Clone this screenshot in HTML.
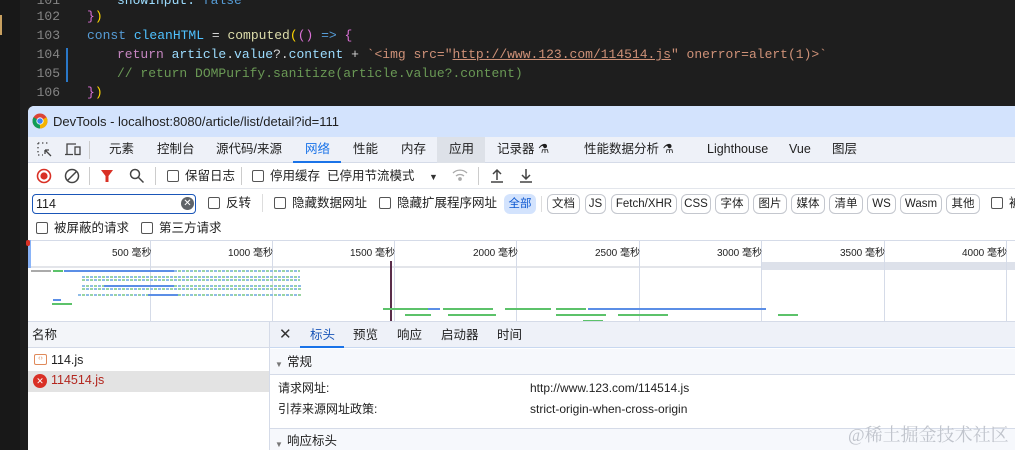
<!DOCTYPE html>
<html><head><meta charset="utf-8"><style>
*{margin:0;padding:0;box-sizing:border-box}
body{width:1015px;height:450px;overflow:hidden;background:#1e1e1e;position:relative;font-family:"Liberation Sans","Noto Sans CJK SC",sans-serif;font-size:12px;color:#1f1f1f}
.a{position:absolute;white-space:nowrap;line-height:15px}
.code{font-family:"Liberation Mono","Noto Sans CJK SC",monospace;font-size:13px;line-height:19px}
.ln{color:#858585;width:60px;text-align:right;left:0}
.cb{width:12px;height:12px;border:1px solid #555;border-radius:2px;display:inline-block;vertical-align:-2px;margin-right:6px}
.chip{position:absolute;top:193px;height:20px;border:1px solid #c4c7ce;border-radius:6px;font-size:11.5px;line-height:18px;text-align:center;background:#fff}
.vl{position:absolute;width:1px;background:#d5dbe8}
.bar{position:absolute;height:2px}
.g{background:#5cc26a}.b{background:#5b8ee6}
</style></head><body>
<div class="a" style="left:0;top:0;width:20px;height:450px;background:#181818"></div>
<div class="a" style="left:0;top:15px;width:2px;height:20px;background:#c8a060"></div>
<div class="a code ln" style="top:-9px">101</div>
<div class="a code ln" style="top:7px">102</div>
<div class="a code ln" style="top:26px">103</div>
<div class="a code ln" style="top:45px">104</div>
<div class="a code ln" style="top:64px">105</div>
<div class="a code ln" style="top:83px">106</div>
<div class="a" style="left:66px;top:48px;width:2px;height:34px;background:#2a78c8"></div>
<div class="a code" style="left:117px;top:-9px;color:#9cdcfe">showInput: <span style="color:#569cd6">false</span></div>
<div class="a code" style="left:87px;top:7px;color:#da70d6">}<span style="color:#ffd700">)</span></div>
<div class="a code" style="left:87px;top:26px;color:#d4d4d4"><span style="color:#569cd6">const</span> <span style="color:#4fc1ff">cleanHTML</span> = <span style="color:#dcdcaa">computed</span><span style="color:#ffd700">(</span><span style="color:#da70d6">()</span> <span style="color:#569cd6">=&gt;</span> <span style="color:#da70d6">{</span></div>
<div class="a code" style="left:117px;top:45px;color:#d4d4d4"><span style="color:#c586c0">return</span> <span style="color:#9cdcfe">article</span>.<span style="color:#9cdcfe">value</span>?.<span style="color:#9cdcfe">content</span> + <span style="color:#ce9178">`&lt;img src="<u>http://www.123.com/114514.js</u>" onerror=alert(1)&gt;`</span></div>
<div class="a code" style="left:117px;top:64px;color:#6a9955">// return DOMPurify.sanitize(article.value?.content)</div>
<div class="a code" style="left:87px;top:83px;color:#da70d6">}<span style="color:#ffd700">)</span></div>

<div class="a" style="left:28px;top:106px;width:987px;height:344px;background:#fff;border-radius:6px 0 0 0;overflow:hidden">
 <div class="a" style="left:0;top:0;width:987px;height:31px;background:#d3e3fd"></div>
 <svg class="a" style="left:4px;top:7px" width="16" height="16" viewBox="0 0 16 16"><circle cx="8" cy="8" r="7.5" fill="#db4437"/><path d="M8 8 L14.5 4.3 A7.5 7.5 0 0 1 8 15.5Z" fill="#f4b400"/><path d="M8 8 L8 15.5 A7.5 7.5 0 0 1 1.5 4.3Z" fill="#0f9d58"/><circle cx="8" cy="8" r="3.6" fill="#fff"/><circle cx="8" cy="8" r="2.8" fill="#4285f4"/></svg>
 <div class="a" style="left:25px;top:8px;font-size:13px">DevTools - localhost:8080/article/list/detail?id=111</div>
 <div class="a" style="left:0;top:31px;width:987px;height:26px;background:#eef1f8;border-bottom:1px solid #d5dbe8"></div>
 <svg class="a" style="left:9px;top:36px" width="16" height="16" viewBox="0 0 16 16" fill="none" stroke="#444" stroke-width="1.3"><path d="M1 1h2M5 1h2M9 1h2M1 1v2M1 5v2M1 9v2M1 13h2M5 13h1" stroke-dasharray="1.4 1"/><path d="M8 8l6 6M8 8h4M8 8v4"/></svg>
 <svg class="a" style="left:37px;top:36px" width="17" height="15" viewBox="0 0 17 15" fill="none" stroke="#444" stroke-width="1.3"><path d="M2 12V2h9M0 12.5h8"/><rect x="10" y="5" width="5" height="7.5"/></svg>
 <div class="a" style="left:61px;top:35px;width:1px;height:18px;background:#ccc"></div>
 <div class="a" style="left:81px;top:36px;font-size:12.5px">元素</div>
 <div class="a" style="left:129px;top:36px;font-size:12.5px">控制台</div>
 <div class="a" style="left:188px;top:36px;font-size:12.5px">源代码/来源</div>
 <div class="a" style="left:265px;top:31px;width:48px;height:26px;border-bottom:2px solid #1a73e8"></div>
 <div class="a" style="left:277px;top:36px;font-size:12.5px;color:#1a73e8">网络</div>
 <div class="a" style="left:325px;top:36px;font-size:12.5px">性能</div>
 <div class="a" style="left:373px;top:36px;font-size:12.5px">内存</div>
 <div class="a" style="left:409px;top:31px;width:48px;height:26px;background:#dde1e8"></div>
 <div class="a" style="left:421px;top:36px;font-size:12.5px">应用</div>
 <div class="a" style="left:469px;top:36px;font-size:12.5px">记录器 ⚗</div>
 <div class="a" style="left:556px;top:36px;font-size:12.5px">性能数据分析 ⚗</div>
 <div class="a" style="left:679px;top:36px;font-size:12.5px">Lighthouse</div>
 <div class="a" style="left:761px;top:36px;font-size:12.5px">Vue</div>
 <div class="a" style="left:804px;top:36px;font-size:12.5px">图层</div>

 <div class="a" style="left:0;top:57px;width:987px;height:26px;border-bottom:1px solid #e3e6ec"></div>
 <svg class="a" style="left:8px;top:62px" width="16" height="16"><circle cx="8" cy="8" r="6.5" fill="none" stroke="#d93025" stroke-width="1.6"/><circle cx="8" cy="8" r="3.6" fill="#d93025"/></svg>
 <svg class="a" style="left:36px;top:62px" width="16" height="16" fill="none" stroke="#444" stroke-width="1.5"><circle cx="8" cy="8" r="6.5"/><path d="M3.5 12.5l9-9"/></svg>
 <div class="a" style="left:61px;top:61px;width:1px;height:18px;background:#ccc"></div>
 <svg class="a" style="left:72px;top:63px" width="14" height="14"><path d="M1 1h12L8.5 7v6h-3V7z" fill="#d93025"/></svg>
 <svg class="a" style="left:101px;top:62px" width="16" height="16" fill="none" stroke="#444" stroke-width="1.5"><circle cx="6" cy="6" r="4.5"/><path d="M9.5 9.5l5 5"/></svg>
 <div class="a" style="left:127px;top:61px;width:1px;height:18px;background:#ccc"></div>
 <div class="a" style="left:139px;top:63px;font-size:12.5px"><span class="cb"></span>保留日志</div>
 <div class="a" style="left:213px;top:61px;width:1px;height:18px;background:#ccc"></div>
 <div class="a" style="left:224px;top:63px;font-size:12.5px"><span class="cb"></span>停用缓存&nbsp; 已停用节流模式</div>
 <div class="a" style="left:401px;top:64px;font-size:9px;color:#333">▼</div>
 <svg class="a" style="left:424px;top:62px" width="16" height="14" fill="none" stroke="#aaa" stroke-width="1.3"><path d="M1 5a10 10 0 0 1 14 0M4 8a6 6 0 0 1 8 0"/><circle cx="8" cy="11" r="1.2" fill="#aaa"/></svg>
 <div class="a" style="left:450px;top:61px;width:1px;height:18px;background:#ccc"></div>
 <svg class="a" style="left:462px;top:62px" width="14" height="16" fill="none" stroke="#444" stroke-width="1.5"><path d="M7 12V2M3 6l4-4 4 4M1 14h12"/></svg>
 <svg class="a" style="left:491px;top:62px" width="14" height="16" fill="none" stroke="#444" stroke-width="1.5"><path d="M7 1v10M3 7l4 4 4-4M1 14h12"/></svg>

 <div class="a" style="left:4px;top:88px;width:164px;height:20px;border:1.5px solid #1a56b8;border-radius:4px"></div>
 <div class="a" style="left:8px;top:91px;font-size:12.5px">114</div>
 <div class="a" style="left:153px;top:91px;width:13px;height:13px;border-radius:50%;background:#5f6368;color:#fff;font-size:10px;line-height:13px;text-align:center">✕</div>
 <div class="a" style="left:180px;top:90px;font-size:12.5px"><span class="cb"></span>反转</div>
 <div class="a" style="left:234px;top:88px;width:1px;height:18px;background:#ddd"></div>
 <div class="a" style="left:246px;top:90px;font-size:12.5px"><span class="cb"></span>隐藏数据网址</div>
 <div class="a" style="left:351px;top:90px;font-size:12.5px"><span class="cb"></span>隐藏扩展程序网址</div>
 <div class="a" style="left:476px;top:88px;width:32px;height:20px;background:#d3e3fd;border-radius:6px;color:#0b57d0;font-size:11.5px;line-height:20px;text-align:center">全部</div>
 <div class="a" style="left:513px;top:90px;width:1px;height:16px;background:#ddd"></div>
 <div class="chip" style="left:519px;top:88px;width:33px">文档</div>
 <div class="chip" style="left:557px;top:88px;width:21px">JS</div>
 <div class="chip" style="left:583px;top:88px;width:66px">Fetch/XHR</div>
 <div class="chip" style="left:653px;top:88px;width:30px">CSS</div>
 <div class="chip" style="left:687px;top:88px;width:34px">字体</div>
 <div class="chip" style="left:725px;top:88px;width:34px">图片</div>
 <div class="chip" style="left:763px;top:88px;width:34px">媒体</div>
 <div class="chip" style="left:801px;top:88px;width:34px">清单</div>
 <div class="chip" style="left:839px;top:88px;width:29px">WS</div>
 <div class="chip" style="left:872px;top:88px;width:42px">Wasm</div>
 <div class="chip" style="left:918px;top:88px;width:34px">其他</div>
 <div class="a" style="left:963px;top:90px;font-size:12.5px"><span class="cb"></span>被</div>
 <div class="a" style="left:8px;top:115px;font-size:12.5px"><span class="cb"></span>被屏蔽的请求</div>
 <div class="a" style="left:113px;top:115px;font-size:12.5px"><span class="cb"></span>第三方请求</div>

 <!-- timeline -->
 <div class="a" style="left:0;top:134px;width:987px;height:1px;background:#d5dbe8"></div>
 <div class="a" style="left:0;top:160px;width:987px;height:2px;background:#e3e5ea"></div>
 <div class="a" style="left:733px;top:156px;width:254px;height:8px;background:#dde1ea"></div>
 <div class="vl" style="left:122px;top:135px;height:80px"></div>
 <div class="vl" style="left:244px;top:135px;height:80px"></div>
 <div class="vl" style="left:366px;top:135px;height:80px"></div>
 <div class="vl" style="left:488px;top:135px;height:80px"></div>
 <div class="vl" style="left:611px;top:135px;height:80px"></div>
 <div class="vl" style="left:733px;top:135px;height:80px"></div>
 <div class="vl" style="left:856px;top:135px;height:80px"></div>
 <div class="vl" style="left:978px;top:135px;height:80px"></div>
 <div class="a" style="left:0;top:134px;width:3px;height:28px;background:#8ab4f8"></div>
 <div class="a" style="left:84px;top:140px;font-size:10px">500 毫秒</div>
 <div class="a" style="left:200px;top:140px;font-size:10px">1000 毫秒</div>
 <div class="a" style="left:322px;top:140px;font-size:10px">1500 毫秒</div>
 <div class="a" style="left:445px;top:140px;font-size:10px">2000 毫秒</div>
 <div class="a" style="left:567px;top:140px;font-size:10px">2500 毫秒</div>
 <div class="a" style="left:689px;top:140px;font-size:10px">3000 毫秒</div>
 <div class="a" style="left:812px;top:140px;font-size:10px">3500 毫秒</div>
 <div class="a" style="left:934px;top:140px;font-size:10px">4000 毫秒</div>
 <div class="a" style="left:362px;top:155px;width:2px;height:60px;background:#5a2d4a"></div>
 <div class="bar" style="left:3px;top:164px;width:20px;background:#aaa"></div>
 <div class="bar g" style="left:25px;top:164px;width:10px"></div>
 <div class="bar b" style="left:36px;top:164px;width:110px"></div>
 <div class="bar" style="left:146px;top:164px;width:126px;background:repeating-linear-gradient(90deg,#8fbce8 0 3px,#fff 3px 4px,#9ad5a0 4px 7px,#fff 7px 8px)"></div>
 <div class="bar" style="left:54px;top:170px;width:218px;background:repeating-linear-gradient(90deg,#8fbce8 0 3px,#fff 3px 4px,#9ad5a0 4px 7px,#fff 7px 8px)"></div>
 <div class="bar" style="left:54px;top:173px;width:218px;background:repeating-linear-gradient(90deg,#9ad5a0 0 3px,#fff 3px 4px,#8fbce8 4px 7px,#fff 7px 8px)"></div>
 <div class="bar" style="left:54px;top:179px;width:220px;background:repeating-linear-gradient(90deg,#8fbce8 0 3px,#fff 3px 4px,#9ad5a0 4px 7px,#fff 7px 8px)"></div>
 <div class="bar b" style="left:76px;top:179px;width:70px"></div>
 <div class="bar" style="left:54px;top:182px;width:220px;background:repeating-linear-gradient(90deg,#9ad5a0 0 3px,#fff 3px 4px,#8fbce8 4px 7px,#fff 7px 8px)"></div>
 <div class="bar" style="left:50px;top:188px;width:224px;background:repeating-linear-gradient(90deg,#8fbce8 0 3px,#fff 3px 4px,#9ad5a0 4px 7px,#fff 7px 8px)"></div>
 <div class="bar b" style="left:120px;top:188px;width:30px"></div>
 <div class="bar g" style="left:24px;top:197px;width:20px"></div>
 <div class="bar b" style="left:25px;top:193px;width:8px"></div>
 <div class="bar g" style="left:355px;top:202px;width:46px"></div>
 <div class="bar b" style="left:400px;top:202px;width:12px"></div>
 <div class="bar g" style="left:415px;top:202px;width:50px"></div>
 <div class="bar g" style="left:477px;top:202px;width:46px"></div>
 <div class="bar g" style="left:528px;top:202px;width:30px"></div>
 <div class="bar b" style="left:560px;top:202px;width:178px"></div>
 <div class="bar g" style="left:377px;top:208px;width:26px"></div>
 <div class="bar g" style="left:420px;top:208px;width:48px"></div>
 <div class="bar g" style="left:528px;top:208px;width:50px"></div>
 <div class="bar g" style="left:590px;top:208px;width:50px"></div>
 <div class="bar g" style="left:750px;top:208px;width:20px"></div>
 <div class="bar g" style="left:555px;top:214px;width:20px"></div>
 <div class="bar g" style="left:771px;top:217px;width:10px"></div>
 <div class="bar b" style="left:782px;top:217px;width:18px"></div>
 <div class="bar g" style="left:924px;top:217px;width:10px"></div>

 <!-- bottom -->
 <div class="a" style="left:0;top:215px;width:987px;height:1px;background:#d5dbe8"></div>
 <div class="a" style="left:0;top:216px;width:241px;height:26px;background:#f3f5f9;border-bottom:1px solid #d5dbe8"></div>
 <div class="a" style="left:4px;top:222px;font-size:12.5px">名称</div>
 <div class="a" style="left:241px;top:216px;width:1px;height:234px;background:#d5dbe8"></div>
 <div class="a" style="left:6px;top:248px;width:13px;height:11px;border:1.5px solid #e08a5a;border-radius:2px;font-size:7px;color:#e08a5a;line-height:8px;text-align:center">‹›</div>
 <div class="a" style="left:23px;top:247px;font-size:12.5px">114.js</div>
 <div class="a" style="left:0;top:265px;width:241px;height:21px;background:#e3e3e3"></div>
 <div class="a" style="left:5px;top:268px;width:14px;height:14px;border-radius:50%;background:#d93025;color:#fff;font-size:9px;line-height:14px;text-align:center">✕</div>
 <div class="a" style="left:23px;top:267px;font-size:12.5px;color:#b3261e">114514.js</div>

 <div class="a" style="left:242px;top:216px;width:745px;height:26px;background:#eef1f8;border-bottom:1px solid #c8d8f0"></div>
 <div class="a" style="left:251px;top:221px;font-size:15px;color:#333">✕</div>
 <div class="a" style="left:272px;top:240px;width:44px;height:2px;background:#1a73e8"></div>
 <div class="a" style="left:282px;top:222px;font-size:12.5px;color:#1a56b8">标头</div>
 <div class="a" style="left:325px;top:222px;font-size:12.5px">预览</div>
 <div class="a" style="left:369px;top:222px;font-size:12.5px">响应</div>
 <div class="a" style="left:413px;top:222px;font-size:12.5px">启动器</div>
 <div class="a" style="left:469px;top:222px;font-size:12.5px">时间</div>
 <div class="a" style="left:242px;top:243px;width:745px;height:26px;background:#f6f8fc;border-bottom:1px solid #d5dbe8"></div>
 <div class="a" style="left:247px;top:251px;font-size:8px;color:#777">▼</div>
 <div class="a" style="left:259px;top:249px;font-size:12.5px">常规</div>
 <div class="a" style="left:250px;top:275px;font-size:12px">请求网址:</div>
 <div class="a" style="left:502px;top:275px;font-size:12px">http://www.123.com/114514.js</div>
 <div class="a" style="left:250px;top:296px;font-size:12px">引荐来源网址政策:</div>
 <div class="a" style="left:502px;top:296px;font-size:12px">strict-origin-when-cross-origin</div>
 <div class="a" style="left:242px;top:322px;width:745px;height:28px;background:#f6f8fc;border-top:1px solid #d5dbe8"></div>
 <div class="a" style="left:247px;top:331px;font-size:8px;color:#777">▼</div>
 <div class="a" style="left:259px;top:328px;font-size:12.5px">响应标头</div>
</div>
<div class="a" style="left:26px;top:240px;width:4px;height:6px;background:#d93025;border-radius:2px"></div>
<div class="a" style="left:848px;top:425px;font-size:18px;line-height:20px;color:#c0c4cc;font-family:'Liberation Serif','Noto Serif CJK SC',serif">@稀土掘金技术社区</div>
</body></html>
